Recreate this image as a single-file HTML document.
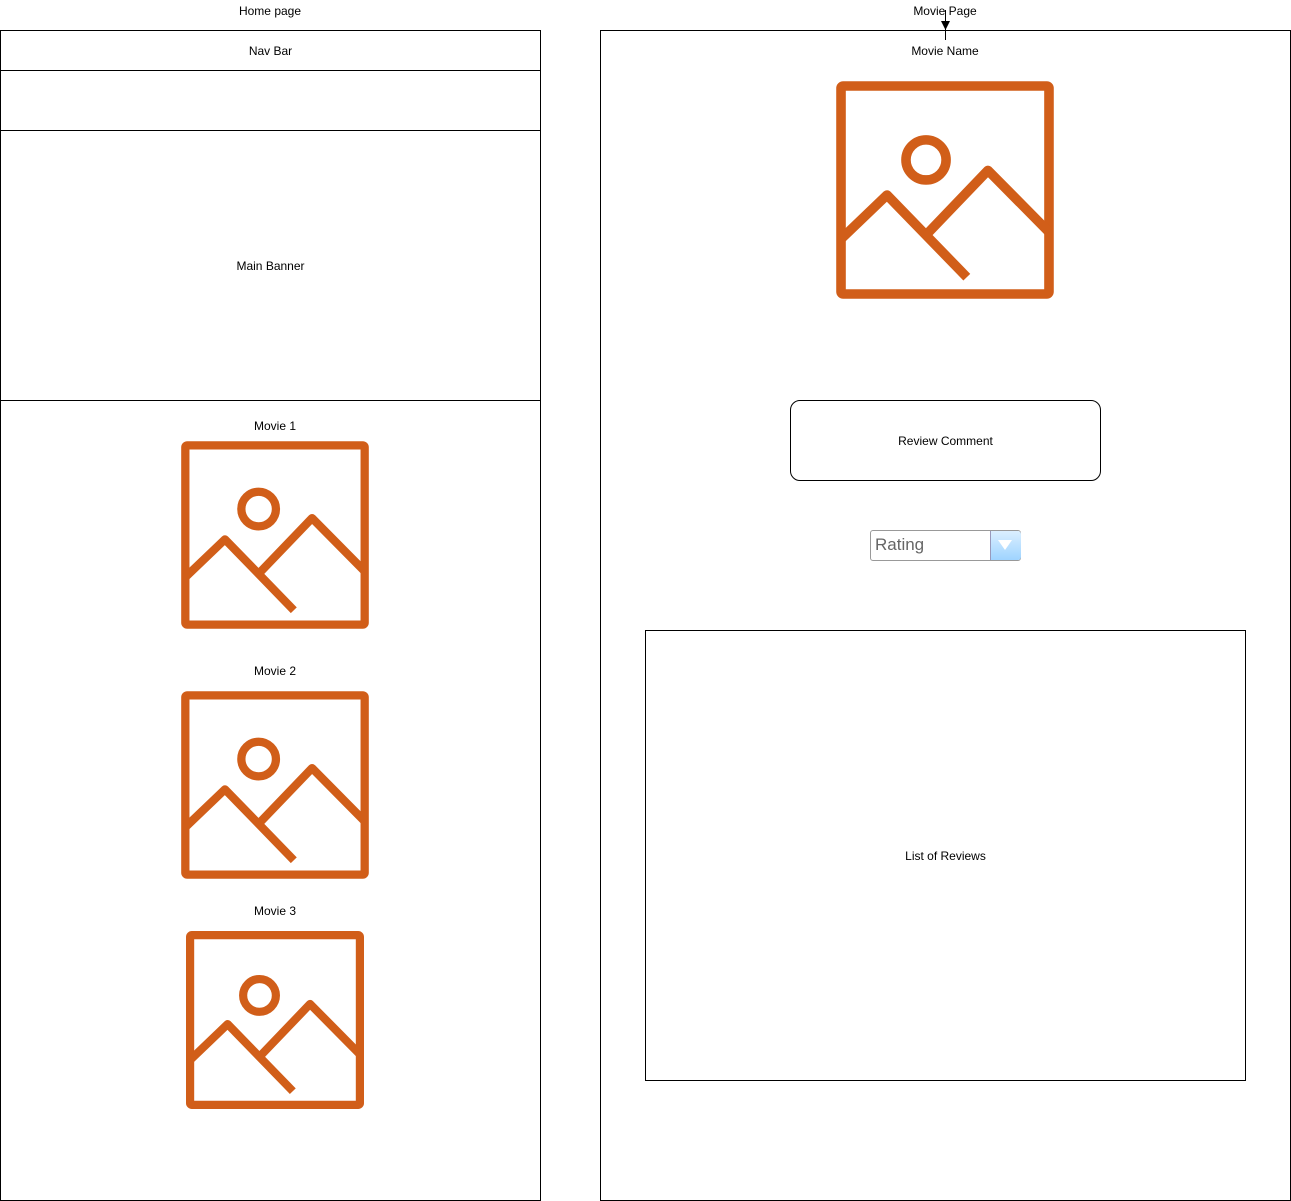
<!DOCTYPE html>
<html><head><meta charset="utf-8">
<style>
html,body{margin:0;padding:0;background:#fff;}
body{width:1291px;height:1201px;position:relative;overflow:hidden;font-family:"Liberation Sans",Arial,sans-serif;font-size:12px;color:#000;}
.a{position:absolute;}
.box{position:absolute;border:1px solid #000;box-sizing:border-box;}
.t{position:absolute;text-align:center;white-space:nowrap;line-height:14px;}
svg.ic{position:absolute;overflow:visible;}
</style></head><body>

<div class="t" style="left:170px;width:200px;top:4px;">Home page</div>
<div class="t" style="left:845px;width:200px;top:4px;">Movie Page</div>

<!-- Home page frame -->
<div class="box" style="left:0;top:30px;width:541px;height:1171px;"></div>
<div class="a" style="left:0;top:70px;width:541px;height:1px;background:#000;"></div>
<div class="a" style="left:0;top:130px;width:541px;height:1px;background:#000;"></div>
<div class="a" style="left:0;top:400px;width:541px;height:1px;background:#000;"></div>
<div class="t" style="left:0;width:541px;top:44px;">Nav Bar</div>
<div class="t" style="left:0;width:541px;top:259px;">Main Banner</div>
<div class="t" style="left:175px;width:200px;top:419px;">Movie 1</div>
<div class="t" style="left:175px;width:200px;top:664px;">Movie 2</div>
<div class="t" style="left:175px;width:200px;top:904px;">Movie 3</div>

<!-- Movie page frame -->
<div class="box" style="left:600px;top:30px;width:691px;height:1171px;"></div>
<div class="t" style="left:845px;width:200px;top:44px;">Movie Name</div>
<div class="a" style="left:945px;top:10px;width:1px;height:30px;background:#000;"></div>
<svg class="a" style="left:940px;top:20px;" width="11" height="11"><path d="M1 1 L10 1 L5.5 10 Z" fill="#000"/></svg>

<div class="box" style="left:790px;top:400px;width:311px;height:81px;border-radius:10px;"></div>
<div class="t" style="left:790px;width:311px;top:434px;">Review Comment</div>

<div class="box" style="left:870px;top:530px;width:151px;height:31px;border:1px solid #999;border-radius:3px;background:#fff;"></div>
<div class="a" style="left:990px;top:531px;width:30px;height:29px;background:linear-gradient(#dbefff,#9fd4ff);border-left:1px solid #99b;border-radius:0 3px 3px 0;"></div>
<svg class="a" style="left:998px;top:540px;" width="14" height="10"><path d="M0 0 L14 0 L7 10 Z" fill="#fff"/></svg>
<div class="a" style="left:875px;top:535px;font-size:17px;color:#666;line-height:20px;">Rating</div>

<div class="box" style="left:645px;top:630px;width:601px;height:451px;"></div>
<div class="t" style="left:645px;width:601px;top:849px;">List of Reviews</div>

<!-- icons -->
<svg class="ic" style="left:836px;top:81px;" width="218" height="218" viewBox="0 0 100 100" preserveAspectRatio="none">
<g fill="none" stroke="#d15e19" stroke-width="4.4" stroke-linejoin="round">
<rect x="2.3" y="2.3" width="95.4" height="95.4" rx="1"/>
<circle cx="41.3" cy="36.2" r="9.2"/>
<path d="M2.3 72.5 L23.4 52.3 L60 90"/>
<path d="M42.2 69.7 L69.7 41 L97.7 69.3"/>
</g></svg>
<svg class="ic" style="left:181px;top:441px;" width="188" height="188" viewBox="0 0 100 100" preserveAspectRatio="none">
<g fill="none" stroke="#d15e19" stroke-width="4.4" stroke-linejoin="round">
<rect x="2.3" y="2.3" width="95.4" height="95.4" rx="1"/>
<circle cx="41.3" cy="36.2" r="9.2"/>
<path d="M2.3 72.5 L23.4 52.3 L60 90"/>
<path d="M42.2 69.7 L69.7 41 L97.7 69.3"/>
</g></svg>
<svg class="ic" style="left:181px;top:691px;" width="188" height="188" viewBox="0 0 100 100" preserveAspectRatio="none">
<g fill="none" stroke="#d15e19" stroke-width="4.4" stroke-linejoin="round">
<rect x="2.3" y="2.3" width="95.4" height="95.4" rx="1"/>
<circle cx="41.3" cy="36.2" r="9.2"/>
<path d="M2.3 72.5 L23.4 52.3 L60 90"/>
<path d="M42.2 69.7 L69.7 41 L97.7 69.3"/>
</g></svg>
<svg class="ic" style="left:186px;top:931px;" width="178" height="178" viewBox="0 0 100 100" preserveAspectRatio="none">
<g fill="none" stroke="#d15e19" stroke-width="4.6" stroke-linejoin="round">
<rect x="2.3" y="2.3" width="95.4" height="95.4" rx="1"/>
<circle cx="41.3" cy="36.2" r="9.2"/>
<path d="M2.3 72.5 L23.4 52.3 L60 90"/>
<path d="M42.2 69.7 L69.7 41 L97.7 69.3"/>
</g></svg>

</body></html>
